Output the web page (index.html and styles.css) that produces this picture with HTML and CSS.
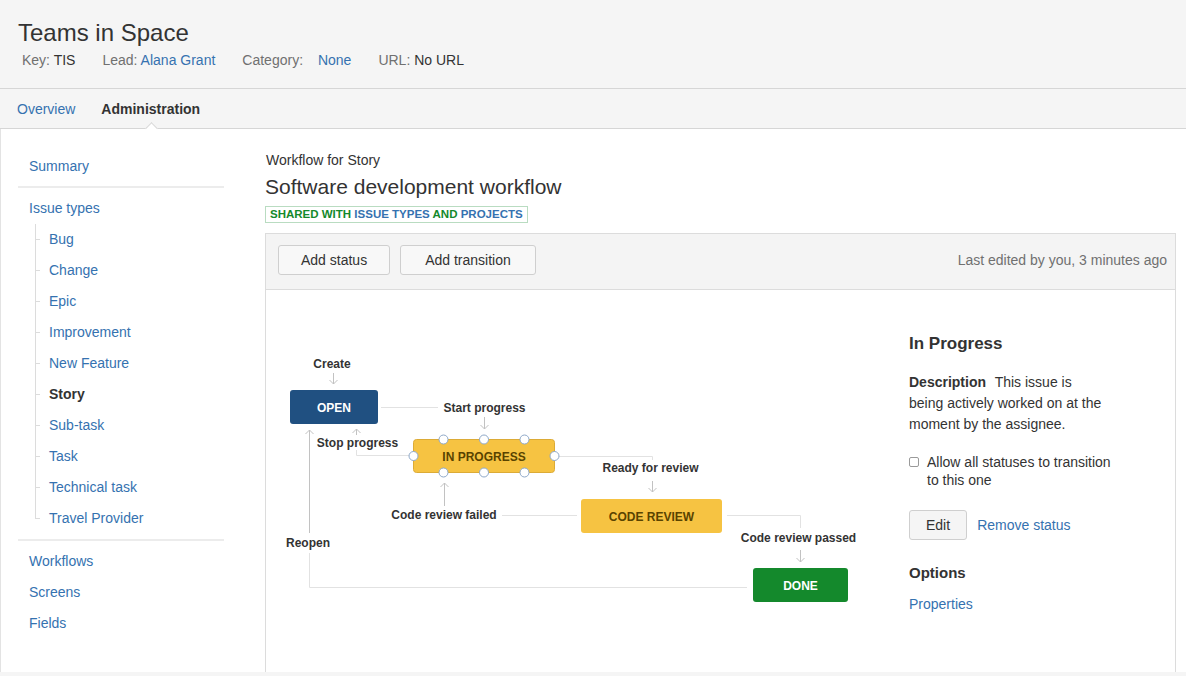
FILE: index.html
```html
<!DOCTYPE html>
<html lang="en">
<head>
<meta charset="utf-8">
<title>Teams in Space – Workflow for Story</title>
<link rel="stylesheet" href="styles.css">
</head>
<body>
<header class="project-header">
  <h1 class="project-title">Teams in Space</h1>
  <div class="project-meta">
    <span class="meta-item"><span class="meta-label">Key:</span> <span class="meta-value">TIS</span></span>
    <span class="meta-item"><span class="meta-label">Lead:</span> <a class="link" href="#">Alana Grant</a></span>
    <span class="meta-item"><span class="meta-label">Category:</span> <a class="link meta-gap" href="#">None</a></span>
    <span class="meta-item"><span class="meta-label">URL:</span> <span class="meta-value">No URL</span></span>
  </div>
</header>
<nav class="tabs">
  <a class="tab link" href="#">Overview</a>
  <a class="tab tab-active" href="#">Administration</a>
</nav>
<main class="page">
  <aside class="sidebar">
    <ul class="nav-list">
      <li><a class="nav-link" href="#">Summary</a></li>
    </ul>
    <ul class="nav-list nav-section">
      <li><a class="nav-link" href="#">Issue types</a>
        <ul class="nav-tree">
          <li class="tree-item"><a class="tree-link" href="#">Bug</a></li>
          <li class="tree-item"><a class="tree-link" href="#">Change</a></li>
          <li class="tree-item"><a class="tree-link" href="#">Epic</a></li>
          <li class="tree-item"><a class="tree-link" href="#">Improvement</a></li>
          <li class="tree-item"><a class="tree-link" href="#">New Feature</a></li>
          <li class="tree-item"><span class="tree-link tree-current">Story</span></li>
          <li class="tree-item"><a class="tree-link" href="#">Sub-task</a></li>
          <li class="tree-item"><a class="tree-link" href="#">Task</a></li>
          <li class="tree-item"><a class="tree-link" href="#">Technical task</a></li>
          <li class="tree-item tree-last"><a class="tree-link" href="#">Travel Provider</a></li>
        </ul>
      </li>
    </ul>
    <ul class="nav-list nav-section nav-section-last">
      <li><a class="nav-link" href="#">Workflows</a></li>
      <li><a class="nav-link" href="#">Screens</a></li>
      <li><a class="nav-link" href="#">Fields</a></li>
    </ul>
  </aside>

  <section class="content">
    <div class="content-sub">Workflow for Story</div>
    <h2 class="content-title">Software development workflow</h2>
    <div class="badge"><span class="badge-green">Shared with</span> <span class="badge-blue">issue types</span> <span class="badge-green">and</span> <span class="badge-blue">projects</span></div>

    <div class="panel">
      <div class="toolbar">
        <button class="btn" type="button">Add status</button>
        <button class="btn btn-wide" type="button">Add transition</button>
        <span class="toolbar-note">Last edited by you, 3 minutes ago</span>
      </div>
      <div class="panel-body">
        <div class="canvas">
          <svg class="diagram" width="643" height="382" viewBox="266 290 643 382" xmlns="http://www.w3.org/2000/svg">
            <g class="wire">
              <path d="M381 407.5 H438"/>
              <path d="M409 455.5 H356.5 V450"/>
              <path d="M559 456.5 H652.5 V460"/>
              <path d="M502 515.5 H577"/>
              <path d="M727 515.5 H800.5 V528"/>
              <path d="M747 587.5 H309.5 V553"/>
            </g>
            <g class="arrow">
              <path d="M333.5 373 V384 M329.5 380 L333.5 384 L337.5 380"/>
              <path d="M484.5 417 V429 M480.5 425 L484.5 429 L488.5 425"/>
              <path d="M356.5 435 V429 M352.5 433 L356.5 429 L360.5 433"/>
              <path d="M652.5 481 V492 M648.5 488 L652.5 492 L656.5 488"/>
              <path d="M444.5 506 V483 M440.5 487 L444.5 483 L448.5 487"/>
              <path d="M800.5 550 V562 M796.5 558 L800.5 562 L804.5 558"/>
              <path d="M309.5 533 V430 M305.5 434 L309.5 430 L313.5 434"/>
            </g>

            <rect class="node-open" x="290" y="390" width="88" height="34" rx="3"/>
            <text class="node-label node-label-light" x="334" y="411.5">OPEN</text>

            <rect class="node-progress" x="413.5" y="439.5" width="141" height="33" rx="3"/>
            <text class="node-label node-label-dark" x="484" y="460.5">IN PROGRESS</text>
            <circle class="handle" cx="443.5" cy="439.5" r="4.5"/>
            <circle class="handle" cx="484" cy="439.5" r="4.5"/>
            <circle class="handle" cx="524.5" cy="439.5" r="4.5"/>
            <circle class="handle" cx="443.5" cy="472.5" r="4.5"/>
            <circle class="handle" cx="484" cy="472.5" r="4.5"/>
            <circle class="handle" cx="524.5" cy="472.5" r="4.5"/>
            <circle class="handle" cx="413.5" cy="456" r="4.5"/>
            <circle class="handle" cx="554.5" cy="456" r="4.5"/>

            <rect class="node-review" x="581" y="499" width="141" height="34" rx="3"/>
            <text class="node-label node-label-dark" x="651.5" y="520.5">CODE REVIEW</text>

            <rect class="node-done" x="753" y="568" width="95" height="34" rx="3"/>
            <text class="node-label node-label-light" x="800.5" y="589.5">DONE</text>

            <text class="flow-label" x="332" y="368.3">Create</text>
            <text class="flow-label" x="484.5" y="412.3">Start progress</text>
            <text class="flow-label" x="357.5" y="447.3">Stop progress</text>
            <text class="flow-label" x="650.5" y="472.3">Ready for review</text>
            <text class="flow-label" x="444" y="518.8">Code review failed</text>
            <text class="flow-label" x="798.5" y="542.3">Code review passed</text>
            <text class="flow-label" x="308" y="547.3">Reopen</text>
          </svg>
        </div>
        <div class="details">
          <h3 class="details-title">In Progress</h3>
          <p class="details-desc"><strong class="details-key">Description</strong> <span>This issue is</span><br><span>being actively worked on at the moment by the assignee.</span></p>
          <label class="details-check"><input class="checkbox" type="checkbox"><span>Allow all statuses to transition to this one</span></label>
          <div class="details-actions">
            <button class="btn btn-edit" type="button">Edit</button>
            <a class="link" href="#">Remove status</a>
          </div>
          <h4 class="details-sub">Options</h4>
          <a class="link details-link" href="#">Properties</a>
        </div>
      </div>
    </div>
  </section>
</main>
</body>
</html>
```

FILE: styles.css
```css
* { box-sizing: border-box; }

html, body { margin: 0; padding: 0; }

body {
  background: #f5f5f5;
  font-family: "Liberation Sans", Arial, sans-serif;
  font-size: 14px;
  color: #333;
  height: 676px;
  overflow: hidden;
}

a { text-decoration: none; }
.link { color: #3572b0; }

/* Header */
.project-header {
  height: 89px;
  padding: 17px 18px 0;
  border-bottom: 1px solid #d6d6d6;
}
.project-title {
  margin: 0;
  font-size: 24px;
  line-height: 32px;
  font-weight: normal;
  color: #333;
}
.project-meta {
  display: flex;
  gap: 27px;
  margin-top: 1px;
  padding-left: 4px;
  line-height: 20px;
}
.meta-label { color: #707070; }
.meta-value { color: #333; }
.meta-gap { margin-left: 11px; }

/* Tabs */
.tabs {
  display: flex;
  gap: 26px;
  height: 40px;
  padding-left: 17px;
  border-bottom: 1px solid #d6d6d6;
}
.tab {
  padding-top: 1px;
  line-height: 38px;
}
.tab-active {
  position: relative;
  color: #333;
  font-weight: bold;
}
.tab-active::after {
  content: "";
  position: absolute;
  left: 50%;
  bottom: -5px;
  width: 8px;
  height: 8px;
  margin-left: -4px;
  background: #fff;
  border-top: 1px solid #d6d6d6;
  border-left: 1px solid #d6d6d6;
  transform: rotate(45deg);
}

/* Page */
.page {
  display: flex;
  height: 543px;
  overflow: hidden;
  background: #fff;
  border-left: 1px solid #e3e3e3;
}

/* Sidebar */
.sidebar {
  flex: none;
  width: 264px;
  padding: 22px 0 0 17px;
}
.nav-list {
  list-style: none;
  margin: 0;
  padding: 0;
  width: 206px;
}
.nav-link {
  display: block;
  line-height: 31px;
  padding-left: 11px;
  color: #3572b0;
}
.nav-section {
  margin-top: 4px;
  padding-top: 5px;
  border-top: 2px solid #ececec;
}
.nav-section-last {
  margin-top: 5px;
  padding-top: 5px;
}
.nav-tree {
  list-style: none;
  margin: 0 0 0 17px;
  padding: 0;
}
.tree-item {
  background:
    linear-gradient(#dcdcdc, #dcdcdc) 0 0 / 1px 100% no-repeat,
    linear-gradient(#dcdcdc, #dcdcdc) 0 50% / 5px 1px no-repeat;
}
.tree-last {
  background:
    linear-gradient(#dcdcdc, #dcdcdc) 0 0 / 1px 50% no-repeat,
    linear-gradient(#dcdcdc, #dcdcdc) 0 50% / 5px 1px no-repeat;
}
.tree-link {
  display: block;
  line-height: 31px;
  padding-left: 14px;
  color: #3572b0;
}
.tree-current {
  color: #333;
  font-weight: bold;
}

/* Content */
.content {
  flex: 1;
  min-width: 0;
  padding: 21px 10px 0 0;
}
.content-sub {
  line-height: 20px;
  padding-left: 1px;
}
.content-title {
  margin: 4px 0 0;
  font-size: 21px;
  line-height: 26px;
  font-weight: normal;
  color: #333;
}
.badge {
  width: max-content;
  margin-top: 6px;
  padding: 0 4px;
  border: 1px solid #b9dcc1;
  font-size: 11.5px;
  line-height: 15px;
  font-weight: bold;
  text-transform: uppercase;
}
.badge-green { color: #14892c; }
.badge-blue { color: #3572b0; }

/* Workflow panel */
.panel {
  margin-top: 10px;
  border: 1px solid #dcdcdc;
  height: 600px;
}
.toolbar {
  display: flex;
  align-items: center;
  gap: 10px;
  padding: 11px 8px 14px 12px;
  background: #f4f4f4;
  border-bottom: 1px solid #dcdcdc;
}
.btn {
  height: 30px;
  padding: 0 22px;
  font-family: inherit;
  font-size: 14px;
  color: #333;
  background: #f8f8f8;
  border: 1px solid #cfcfcf;
  border-radius: 3px;
}
.btn-wide { padding: 0 24px; }
.toolbar-note {
  margin-left: auto;
  color: #707070;
}
.panel-body {
  display: flex;
}
.canvas {
  flex: none;
  width: 643px;
}
.diagram { display: block; }

.wire { fill: none; stroke: #e2e2e2; stroke-width: 1; }
.arrow { fill: none; stroke: #c2c2c2; stroke-width: 1; }
.node-open { fill: #205081; }
.node-progress { fill: #f6c342; stroke: #dcab36; stroke-width: 1; }
.node-review { fill: #f6c342; }
.node-done { fill: #14892c; }
.node-label {
  font-family: "Liberation Sans", Arial, sans-serif;
  font-size: 12px;
  font-weight: bold;
  text-anchor: middle;
}
.node-label-light { fill: #fff; }
.node-label-dark { fill: #594300; }
.flow-label {
  font-family: "Liberation Sans", Arial, sans-serif;
  font-size: 12px;
  font-weight: bold;
  fill: #333;
  text-anchor: middle;
}
.handle { fill: #fff; stroke: #8ea8c8; stroke-width: 1; }

/* Details */
.details {
  flex: none;
  width: 212px;
  padding-top: 42px;
}
.details-title {
  margin: 0;
  font-size: 17px;
  line-height: 24px;
  font-weight: bold;
}
.details-desc {
  margin: 16px 0 0;
  line-height: 21px;
}
.details-key { margin-right: 5px; }
.details-check {
  display: flex;
  gap: 8px;
  margin-top: 18px;
  line-height: 18px;
}
.checkbox {
  appearance: none;
  flex: none;
  width: 10px;
  height: 10px;
  margin: 4px 0 0;
  border: 1px solid #9a9a9a;
  border-radius: 2px;
  background: #fff;
}
.details-actions {
  display: flex;
  align-items: center;
  gap: 10px;
  margin-top: 21px;
}
.btn-edit {
  padding: 0 16px;
  background: #f5f5f5;
}
.details-sub {
  margin: 22px 0 0;
  font-size: 15px;
  line-height: 22px;
  font-weight: bold;
}
.details-link {
  display: block;
  margin-top: 10px;
  line-height: 20px;
}
```
